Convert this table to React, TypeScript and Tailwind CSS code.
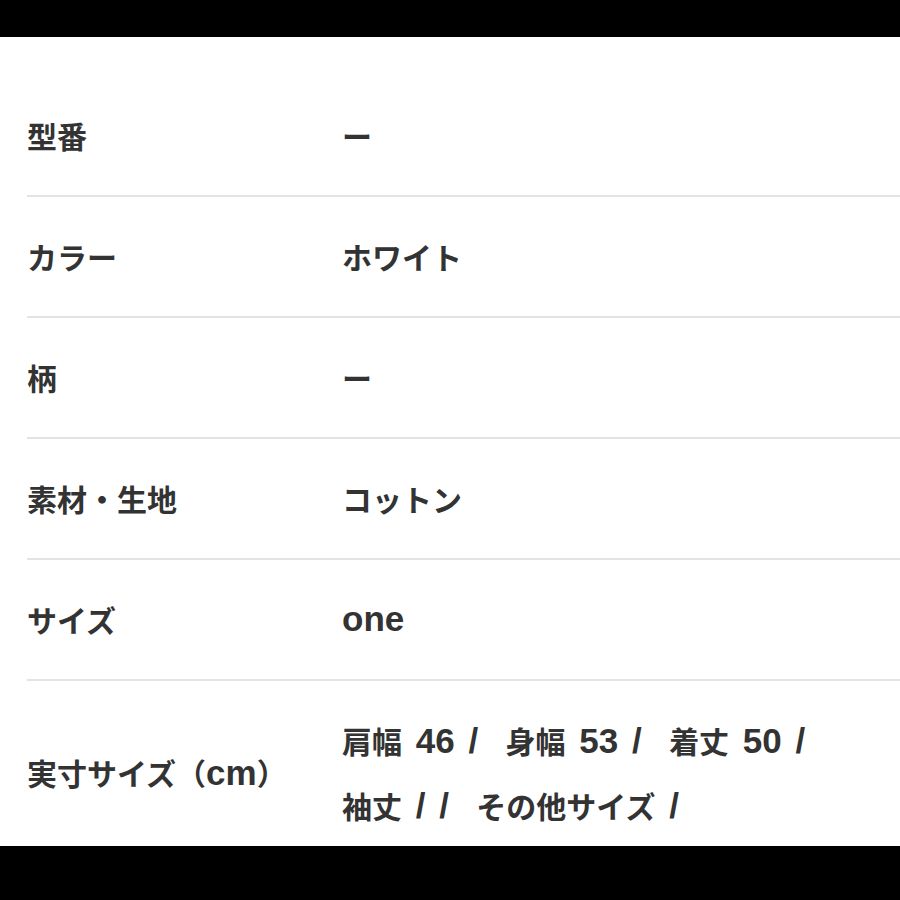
import React from 'react';

// latin runs are set larger and in a Helvetica-like face, as in the source
const L: React.FC<{ children: React.ReactNode }> = ({ children }) => (
  <span className="font-['Liberation_Sans',sans-serif] text-[35px] [word-spacing:4px]">{children}</span>
);

const rows: { label: React.ReactNode; value: React.ReactNode }[] = [
  { label: '型番', value: 'ー' },
  { label: 'カラー', value: 'ホワイト' },
  { label: '柄', value: 'ー' },
  { label: '素材・生地', value: 'コットン' },
  { label: 'サイズ', value: <L>one</L> },
];

const App: React.FC = () => {
  return (
    <div className="flex h-[900px] w-[900px] flex-col bg-white font-['Noto_Sans_CJK_JP','Noto_Sans',sans-serif] text-[#333333]">
      <div className="h-[37px] shrink-0 bg-black" />

      <div className="flex-1 overflow-hidden pl-[27px] pt-[39px]">
        {rows.map((row, i) => (
          <div
            key={i}
            className="flex h-[121px] items-center border-b-2 border-[#e3e3e3] text-[30px] font-bold"
          >
            <div className="w-[315px] shrink-0">{row.label}</div>
            <div>{row.value}</div>
          </div>
        ))}

        {/* last row runs under the bottom bar */}
        <div className="flex h-[184px] items-center text-[30px] font-bold">
          <div className="w-[315px] shrink-0 whitespace-pre">
            実寸サイズ（<L>cm</L>）
          </div>
          <div className="whitespace-pre leading-[64px]">
            肩幅<L> 46 /  </L>身幅<L> 53 /  </L>着丈<L> 50 /</L>
            <br />
            袖丈<L> / /  </L>その他サイズ<L> /</L>
          </div>
        </div>
      </div>

      <div className="h-[54px] shrink-0 bg-black" />
    </div>
  );
};

export default App;
